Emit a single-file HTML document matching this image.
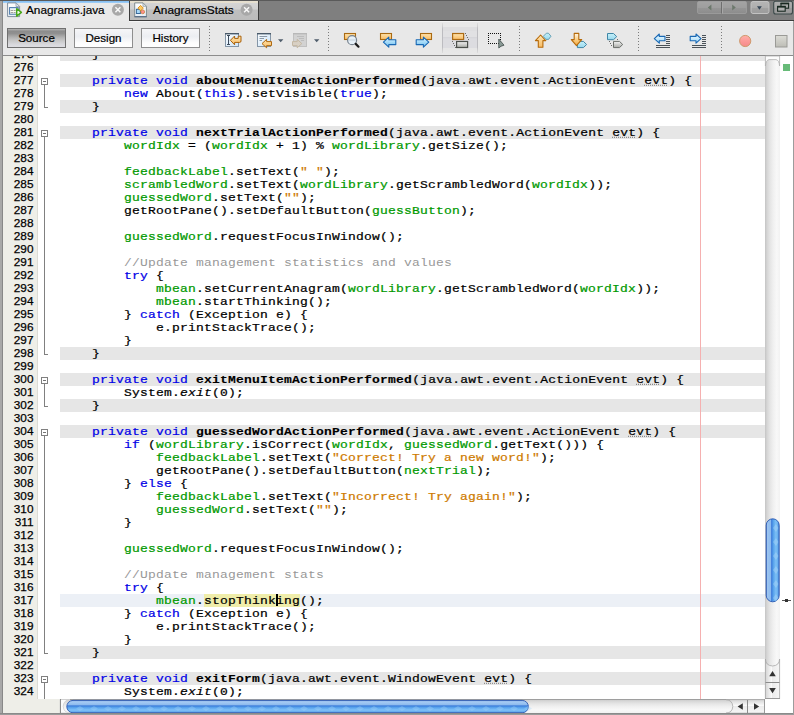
<!DOCTYPE html>
<html><head><meta charset="utf-8"><title>Anagrams.java</title>
<style>
html,body{margin:0;padding:0}
body{width:794px;height:715px;overflow:hidden;background:#fff;position:relative;font-family:"Liberation Sans",sans-serif}
.abs,#win *{position:absolute;box-sizing:border-box}
#win{position:absolute;left:0;top:0;width:794px;height:715px;overflow:hidden;background:#fff}
/* tab bar */
#tabbar{left:0;top:0;width:794px;height:21px;background:#7f7f7f}
#tabbar .botline{left:129px;top:20px;width:665px;height:1px;background:#3c3c3c}
#tabbar .topline{left:0;top:0;width:794px;height:1px;background:#5a5a5a}
#tab1{left:3px;top:1px;width:126px;height:20px;background:#e9e9e9}
#tab1 .hl{left:0;top:0;width:126px;height:2px;background:linear-gradient(#7ebaf0,#a4d0f6)}
#tab2{left:130px;top:1px;width:129px;height:19px;background:linear-gradient(#e6dfcf 0,#e4decf 2px,#d4d4d4 2px,#d0d0d0 8px,#bfbfbf 9px,#bcbcbc 100%);border-right:1px solid #3c3c3c}
#tabsep{left:129px;top:1px;width:1px;height:20px;background:#3c3c3c}
.tabtxt{-webkit-text-stroke:0.2px #000;font-size:11.8px;color:#000;white-space:nowrap;line-height:14px}
.close{width:13px;height:13px;border-radius:7px;background:#a9a9a9}
/* toolbar */
#toolbar{left:3px;top:21px;width:791px;height:34px;background:#e8e8e8}
#tbhl{left:129px;top:21px;width:665px;height:1px;background:#f4f4f4}
#tbline{left:0;top:55px;width:794px;height:1px;background:#8c8c8c}
.btn{-webkit-text-stroke:0.2px #000;top:28px;width:59px;height:20px;border:1px solid #8e8e8e;background:linear-gradient(#f6f6f8 0,#eceef2 40%,#f2f3f6 55%,#fcfcfc 75%,#ffffff);font-size:11.6px;text-align:center;line-height:18px;color:#000}
.btn.sel{border-color:#707070;background:linear-gradient(#b4b4b4 0,#8c8c8c 12%,#909090 25%,#b0b0b0 45%,#c8c8c8 65%,#d8d8dc 85%,#dedee2 100%)}
.sep{top:25px;width:1px;height:26px;background:repeating-linear-gradient(#8a8a8a 0 1px,transparent 1px 3px)}
/* borders */
#lb{left:0;top:1px;width:3px;height:714px;background:linear-gradient(90deg,#a8a8a8 0 2px,#888 2px)}
#bb{left:0;top:713px;width:794px;height:2px;background:linear-gradient(#8a8a8a 0 1px,#9c9c9c 1px)}
#rb{left:793px;top:21px;width:1px;height:694px;background:#9c9c9c}
/* editor */
#gutter{left:3px;top:56px;width:34px;height:643px;background:#eeeee8}
#gutline{left:37px;top:56px;width:1px;height:643px;background:#dcdcd6}
#corner{left:3px;top:699px;width:57px;height:14px;background:#eeeee8}
#ed{left:0;top:56px;width:794px;height:643px;overflow:hidden}
#edin{left:0;top:-56px;width:794px;height:760px}
.num{-webkit-text-stroke:0.25px #000;left:2px;width:31.5px;height:13px;text-align:right;font-size:11.8px;line-height:13px;margin-top:0px;color:#000;white-space:pre}
.ln{left:60px;width:705px;height:13px;font-family:"Liberation Mono",monospace;font-size:13px;letter-spacing:0.2px;line-height:13px;white-space:pre;color:#000;-webkit-text-stroke:0.25px currentColor}
.ln.g{background:#e6e6e6}
.ln.cur{background:none}
#curband{left:60px;top:594px;width:705px;height:13px;background:#ecf0f6}
.ln span{position:static!important}
.ln .t{display:inline-block;transform:scaleY(0.9);transform-origin:0 10px}
.k{color:#0000e6}.f{color:#009900}.s{color:#ce7b00}.c{color:#989898;-webkit-text-stroke:0}.m{font-weight:bold;-webkit-text-stroke:0.15px currentColor}.i{font-style:italic}
.u{text-decoration:underline dotted #8a8a8a;text-underline-offset:1px}
.h{}
#hl{left:204px;top:594px;width:96px;height:13px;background:#efedaa}
.fbox{left:41px;width:7px;height:7px;border:1px solid #808080;background:#fff}
.fbox i{left:1px;top:2px;width:3px;height:1px;background:#747474}
.fv{left:44px;width:1px;background:#808080}
.fh{left:44px;width:4px;height:1px;background:#808080}
#margin{left:700px;top:56px;width:1px;height:643px;background:#f5b0b0}
#caret{left:276px;top:594px;width:2px;height:12px;background:#000}
/* scrollbars */
#vs{left:765px;top:56px;width:15px;height:643px;background:linear-gradient(90deg,#c4c4c4,#d6d6d6 14%,#e6e6e6 35%,#f0f0f0 55%,#f8f8f8 78%,#f2f2f2)}
#hs{left:60px;top:699px;width:705px;height:14px;background:linear-gradient(#c4c4c4,#d6d6d6 14%,#e6e6e6 35%,#f0f0f0 55%,#f8f8f8 78%,#f2f2f2)}
#stripe{left:780px;top:56px;width:13px;height:657px;background:#fff}
#green{left:783px;top:64px;width:7px;height:7px;background:#67bb78}
</style></head><body>
<div id="win">
<div id="tabbar"><div class="topline"></div><div class="botline"></div>
 <div id="tab1"><div class="hl"></div><div class="tabtxt" style="left:23px;top:2px">Anagrams.java</div></div>
 <div id="tabsep"></div>
 <div id="tab2"><div class="tabtxt" style="left:23px;top:2px">AnagramsStats</div></div>
</div>
<div id="toolbar"></div><div id="tbhl"></div>
<div class="btn sel" style="left:7px">Source</div>
<div class="btn" style="left:74px">Design</div>
<div class="btn" style="left:141px">History</div>
<div id="tbline"></div>
<svg id="icons" style="left:0;top:21px" width="794" height="35" viewBox="0 21 794 35">
<defs>
<linearGradient id="gO" x1="0" y1="0" x2="0" y2="1"><stop offset="0" stop-color="#ffe4ae"/><stop offset="1" stop-color="#f8bc64"/></linearGradient>
<linearGradient id="gO2" x1="0" y1="0" x2="0" y2="1"><stop offset="0" stop-color="#fff6e4"/><stop offset="0.5" stop-color="#fbd088"/><stop offset="1" stop-color="#f2a83c"/></linearGradient>
<linearGradient id="gB" x1="0" y1="0" x2="0" y2="1"><stop offset="0" stop-color="#e0f4ff"/><stop offset="0.5" stop-color="#a4daf8"/><stop offset="1" stop-color="#6cbcee"/></linearGradient>
<linearGradient id="gB2" x1="0" y1="0" x2="0" y2="1"><stop offset="0" stop-color="#f0faff"/><stop offset="0.5" stop-color="#c8eafc"/><stop offset="1" stop-color="#94d2f6"/></linearGradient>
<linearGradient id="gG" x1="0" y1="0" x2="0" y2="1"><stop offset="0" stop-color="#f4f4f4"/><stop offset="1" stop-color="#a8aaa6"/></linearGradient>
<linearGradient id="gD" x1="0" y1="0" x2="1" y2="1"><stop offset="0" stop-color="#ffffff"/><stop offset="0.5" stop-color="#e2f0fc"/><stop offset="1" stop-color="#cfe6fa"/></linearGradient>
<linearGradient id="gC" x1="0" y1="0" x2="0" y2="1"><stop offset="0" stop-color="#c6f0f8"/><stop offset="1" stop-color="#98d8ee"/></linearGradient>
<linearGradient id="gR" x1="0" y1="0" x2="0" y2="1"><stop offset="0" stop-color="#ffb0a8"/><stop offset="0.5" stop-color="#fb9a98"/><stop offset="1" stop-color="#f58a8a"/></linearGradient>
<linearGradient id="gS" x1="0" y1="0" x2="0" y2="1"><stop offset="0" stop-color="#dcdcd6"/><stop offset="1" stop-color="#bdbdb6"/></linearGradient>
<linearGradient id="gP" x1="0" y1="0" x2="0" y2="1"><stop offset="0" stop-color="#e8e8e8"/><stop offset="0.12" stop-color="#e8e8e8"/><stop offset="0.13" stop-color="#dedee0"/><stop offset="0.27" stop-color="#dedee0"/><stop offset="0.28" stop-color="#e1e1e3"/><stop offset="0.47" stop-color="#e1e1e3"/><stop offset="0.48" stop-color="#d6d6da"/><stop offset="0.51" stop-color="#d6d6da"/><stop offset="0.52" stop-color="#dcdce0"/><stop offset="0.84" stop-color="#dcdce0"/><stop offset="0.85" stop-color="#e6e6e6"/><stop offset="1" stop-color="#e8e8e8"/></linearGradient>
<linearGradient id="gPb" x1="0" y1="0" x2="0" y2="1"><stop offset="0" stop-color="#c4c4c4" stop-opacity="0.3"/><stop offset="0.2" stop-color="#bcbcc0"/><stop offset="0.8" stop-color="#bcbcc0"/><stop offset="1" stop-color="#c4c4c4" stop-opacity="0.3"/></linearGradient>
</defs>
<rect x="209" y="26" width="1" height="1" fill="#7c7c7c"/>
<rect x="209" y="29" width="1" height="1" fill="#7c7c7c"/>
<rect x="209" y="32" width="1" height="1" fill="#7c7c7c"/>
<rect x="209" y="35" width="1" height="1" fill="#7c7c7c"/>
<rect x="209" y="38" width="1" height="1" fill="#7c7c7c"/>
<rect x="209" y="41" width="1" height="1" fill="#7c7c7c"/>
<rect x="209" y="44" width="1" height="1" fill="#7c7c7c"/>
<rect x="209" y="47" width="1" height="1" fill="#7c7c7c"/>
<rect x="209" y="50" width="1" height="1" fill="#7c7c7c"/>
<rect x="328" y="26" width="1" height="1" fill="#7c7c7c"/>
<rect x="328" y="29" width="1" height="1" fill="#7c7c7c"/>
<rect x="328" y="32" width="1" height="1" fill="#7c7c7c"/>
<rect x="328" y="35" width="1" height="1" fill="#7c7c7c"/>
<rect x="328" y="38" width="1" height="1" fill="#7c7c7c"/>
<rect x="328" y="41" width="1" height="1" fill="#7c7c7c"/>
<rect x="328" y="44" width="1" height="1" fill="#7c7c7c"/>
<rect x="328" y="47" width="1" height="1" fill="#7c7c7c"/>
<rect x="328" y="50" width="1" height="1" fill="#7c7c7c"/>
<rect x="519" y="26" width="1" height="1" fill="#7c7c7c"/>
<rect x="519" y="29" width="1" height="1" fill="#7c7c7c"/>
<rect x="519" y="32" width="1" height="1" fill="#7c7c7c"/>
<rect x="519" y="35" width="1" height="1" fill="#7c7c7c"/>
<rect x="519" y="38" width="1" height="1" fill="#7c7c7c"/>
<rect x="519" y="41" width="1" height="1" fill="#7c7c7c"/>
<rect x="519" y="44" width="1" height="1" fill="#7c7c7c"/>
<rect x="519" y="47" width="1" height="1" fill="#7c7c7c"/>
<rect x="519" y="50" width="1" height="1" fill="#7c7c7c"/>
<rect x="638" y="26" width="1" height="1" fill="#7c7c7c"/>
<rect x="638" y="29" width="1" height="1" fill="#7c7c7c"/>
<rect x="638" y="32" width="1" height="1" fill="#7c7c7c"/>
<rect x="638" y="35" width="1" height="1" fill="#7c7c7c"/>
<rect x="638" y="38" width="1" height="1" fill="#7c7c7c"/>
<rect x="638" y="41" width="1" height="1" fill="#7c7c7c"/>
<rect x="638" y="44" width="1" height="1" fill="#7c7c7c"/>
<rect x="638" y="47" width="1" height="1" fill="#7c7c7c"/>
<rect x="638" y="50" width="1" height="1" fill="#7c7c7c"/>
<rect x="721" y="26" width="1" height="1" fill="#7c7c7c"/>
<rect x="721" y="29" width="1" height="1" fill="#7c7c7c"/>
<rect x="721" y="32" width="1" height="1" fill="#7c7c7c"/>
<rect x="721" y="35" width="1" height="1" fill="#7c7c7c"/>
<rect x="721" y="38" width="1" height="1" fill="#7c7c7c"/>
<rect x="721" y="41" width="1" height="1" fill="#7c7c7c"/>
<rect x="721" y="44" width="1" height="1" fill="#7c7c7c"/>
<rect x="721" y="47" width="1" height="1" fill="#7c7c7c"/>
<rect x="721" y="50" width="1" height="1" fill="#7c7c7c"/>
<rect x="225.5" y="33.5" width="13" height="13" fill="url(#gD)" stroke="#8495a6"/>
<rect x="225" y="33" width="14" height="1.4" fill="#4a5a6a"/>
<path d="M227,35.5 h3 M228.5,36 v8 M227,44.5 h3" stroke="#3e4c5c" stroke-width="1" fill="none"/>
<path d="M230.4,40.3 L234.6,36 L234.6,38.4 L238.2,38.4 L238.2,36.2 L241,36.2 L241,41 Q241,42.4 239.6,42.4 L234.6,42.4 L234.6,44.8 Z" fill="url(#gO)" stroke="#a8600a" stroke-width="1" stroke-linejoin="round"/>
<rect x="257.5" y="33.5" width="13" height="13" fill="url(#gD)" stroke="#8495a6"/>
<rect x="257" y="33" width="14" height="1.4" fill="#4a5a6a"/>
<path d="M259.5,36.5 h7.7 M259.5,38.5 h4.5 M259.5,40.5 h2.5" stroke="#8c9aa8" stroke-width="1"/>
<path d="M262,43.6 L266.6,39.4 L266.6,41.6 L271.5,41.6 L271.5,45.6 L266.6,45.6 L266.6,47.800000000000004 Z" fill="url(#gO)" stroke="#b06a12" stroke-width="1" stroke-linejoin="round"/>
<path d="M278,39.2 h5.4 l-2.7,3 z" fill="#4f5d6b"/>
<rect x="293.5" y="33.5" width="13" height="13" fill="#d2d2d2" stroke="#c0c0c0"/>
<rect x="293" y="33" width="14" height="1.4" fill="#b8b8b8"/>
<path d="M297,36.5 h7 M299,38.5 h5 M301,40.5 h3" stroke="#bcbcbc" stroke-width="1"/>
<path d="M301.8,43.6 L297.2,39.4 L297.2,41.6 L292.5,41.6 L292.5,45.6 L297.2,45.6 L297.2,47.800000000000004 Z" fill="#d8d0c4" stroke="#c4b8a4" stroke-width="1" stroke-linejoin="round"/>
<path d="M314,39.2 h5.4 l-2.7,3 z" fill="#4f5d6b"/>
<rect x="344.5" y="33.5" width="11" height="6" fill="url(#gO)" stroke="#aa6a12" stroke-width="1.1"/>
<circle cx="352.1" cy="40.2" r="4.5" fill="#e6f0f8" stroke="#76828e" stroke-width="1.2"/>
<path d="M348.5,40 h7.4" stroke="#b9c6d2" stroke-width="0.8"/>
<path d="M355.7,43.9 L358.5,46.7" stroke="#1c1c1c" stroke-width="2.2" stroke-linecap="round"/>
<rect x="380.5" y="33.5" width="11" height="6" fill="url(#gO)" stroke="#aa6a12" stroke-width="1.1"/>
<path d="M383.4,42.2 L388.79999999999995,37.2 L388.79999999999995,39.800000000000004 L395.8,39.800000000000004 L395.8,44.6 L388.79999999999995,44.6 L388.79999999999995,47.2 Z" fill="url(#gB)" stroke="#1868b4" stroke-width="1.1" stroke-linejoin="round"/>
<rect x="420.5" y="33.5" width="11" height="6" fill="url(#gO)" stroke="#aa6a12" stroke-width="1.1"/>
<path d="M428.8,42.2 L423.40000000000003,37.2 L423.40000000000003,39.800000000000004 L416.2,39.800000000000004 L416.2,44.6 L423.40000000000003,44.6 L423.40000000000003,47.2 Z" fill="url(#gB)" stroke="#1868b4" stroke-width="1.1" stroke-linejoin="round"/>
<rect x="442" y="23" width="36" height="30" fill="url(#gP)"/>
<rect x="442" y="23" width="1" height="30" fill="url(#gPb)"/><rect x="477" y="23" width="1" height="30" fill="url(#gPb)"/>
<rect x="452" y="41" width="1" height="1" fill="#6a6a6a"/>
<rect x="453" y="43" width="1" height="1" fill="#6a6a6a"/>
<rect x="454" y="45" width="1" height="1" fill="#6a6a6a"/>
<rect x="455" y="47" width="1" height="1" fill="#6a6a6a"/>
<rect x="465" y="33" width="1" height="1" fill="#6a6a6a"/>
<rect x="466" y="35" width="1" height="1" fill="#6a6a6a"/>
<rect x="467" y="37" width="1" height="1" fill="#6a6a6a"/>
<rect x="468" y="39" width="1" height="1" fill="#6a6a6a"/>
<rect x="452.6" y="33.5" width="11" height="6" fill="url(#gO)" stroke="#ad6b14" stroke-width="1.2"/>
<rect x="456.6" y="41.5" width="11" height="6" fill="url(#gG)" stroke="#4c504c" stroke-width="1.2"/>
<rect x="488" y="33" width="1" height="1" fill="#111"/><rect x="488" y="43" width="1" height="1" fill="#111"/>
<rect x="490" y="33" width="1" height="1" fill="#111"/><rect x="490" y="43" width="1" height="1" fill="#111"/>
<rect x="492" y="33" width="1" height="1" fill="#111"/><rect x="492" y="43" width="1" height="1" fill="#111"/>
<rect x="494" y="33" width="1" height="1" fill="#111"/><rect x="494" y="43" width="1" height="1" fill="#111"/>
<rect x="496" y="33" width="1" height="1" fill="#111"/><rect x="496" y="43" width="1" height="1" fill="#111"/>
<rect x="498" y="33" width="1" height="1" fill="#111"/><rect x="498" y="43" width="1" height="1" fill="#111"/>
<rect x="500" y="33" width="1" height="1" fill="#111"/><rect x="500" y="43" width="1" height="1" fill="#111"/>
<rect x="488" y="35" width="1" height="1" fill="#111"/><rect x="500" y="35" width="1" height="1" fill="#111"/>
<rect x="488" y="37" width="1" height="1" fill="#111"/><rect x="500" y="37" width="1" height="1" fill="#111"/>
<rect x="488" y="39" width="1" height="1" fill="#111"/><rect x="500" y="39" width="1" height="1" fill="#111"/>
<rect x="488" y="41" width="1" height="1" fill="#111"/><rect x="500" y="41" width="1" height="1" fill="#111"/>
<path d="M498.8,39 L498.8,48 L501,46.2 L504,45.2 Z" fill="#8a9a96" stroke="#4a5654" stroke-width="0.9" stroke-linejoin="round"/>
<path d="M540.6,35 L545.8000000000001,40.6 L542.9,40.6 L542.9,47.3 L538.3000000000001,47.3 L538.3000000000001,40.6 L535.4,40.6 Z" fill="url(#gO)" stroke="#b66a0a" stroke-width="1.1" stroke-linejoin="round"/>
<path d="M543.2,36.4 L546.4,33.2 L548.4,33.2 L551,36.2 L548.6,39.4 L546,39.4 Z" fill="url(#gC)" stroke="#5b9ab0" stroke-width="0.9" stroke-linejoin="round"/>
<path d="M577.4,41.4 L583.4,41.4 L586.6,44.5 L583.4,47.6 L577.4,47.6 Z" fill="url(#gC)" stroke="#3f86a6" stroke-width="1" stroke-linejoin="round"/>
<path d="M576.5,45.6 L581.7,39.6 L578.8,39.6 L578.8,33.4 L574.2,33.4 L574.2,39.6 L571.3,39.6 Z" fill="url(#gO2)" stroke="#b66a0a" stroke-width="1.1" stroke-linejoin="round"/>
<rect x="609" y="41" width="1" height="1" fill="#6a6a6a"/>
<rect x="610" y="43" width="1" height="1" fill="#6a6a6a"/>
<rect x="611" y="45" width="1" height="1" fill="#6a6a6a"/>
<rect x="617" y="39" width="1" height="1" fill="#6a6a6a"/>
<path d="M607.5,33.5 L613.5,33.5 L616.7,36.6 L613.5,39.7 L607.5,39.7 Z" fill="url(#gC)" stroke="#3f86a6" stroke-width="1" stroke-linejoin="round"/>
<path d="M613.5,41.4 L619.5,41.4 L622.7,44.5 L619.5,47.6 L613.5,47.6 Z" fill="url(#gG)" stroke="#6a6e6a" stroke-width="1" stroke-linejoin="round"/>
<path d="M654.3,38.6 L659.3,34.0 L659.3,36.4 L665,36.4 L665,40.800000000000004 L659.3,40.800000000000004 L659.3,43.2 Z" fill="url(#gB2)" stroke="#1868b4" stroke-width="1.1" stroke-linejoin="round"/>
<rect x="666" y="35" width="4" height="1" fill="#4a5258"/>
<rect x="666" y="37" width="4" height="1" fill="#4a5258"/>
<rect x="666" y="39" width="4" height="1" fill="#4a5258"/>
<rect x="666" y="41" width="4" height="1" fill="#4a5258"/>
<rect x="666" y="43" width="4" height="1" fill="#4a5258"/>
<rect x="656" y="45" width="14" height="1" fill="#4a5258"/>
<rect x="656" y="47" width="14" height="1" fill="#4a5258"/>
<path d="M701,38.6 L696,34.0 L696,36.4 L690.2,36.4 L690.2,40.800000000000004 L696,40.800000000000004 L696,43.2 Z" fill="url(#gB2)" stroke="#1868b4" stroke-width="1.1" stroke-linejoin="round"/>
<rect x="702" y="35" width="4" height="1" fill="#4a5258"/>
<rect x="702" y="37" width="4" height="1" fill="#4a5258"/>
<rect x="702" y="39" width="4" height="1" fill="#4a5258"/>
<rect x="702" y="41" width="4" height="1" fill="#4a5258"/>
<rect x="702" y="43" width="4" height="1" fill="#4a5258"/>
<rect x="692" y="45" width="14" height="1" fill="#4a5258"/>
<rect x="692" y="47" width="14" height="1" fill="#4a5258"/>
<circle cx="745.2" cy="41" r="5.6" fill="url(#gR)" stroke="#cf9a6e" stroke-width="1"/>
<rect x="775.5" y="35.5" width="11.5" height="11.5" fill="url(#gS)" stroke="#9a9a96" stroke-width="1"/>
</svg>
<svg id="tabicons" style="left:0;top:0" width="794" height="21" viewBox="0 0 794 21">
<defs><linearGradient id="gDoc" x1="0" y1="0" x2="0" y2="1"><stop offset="0" stop-color="#ffffff"/><stop offset="1" stop-color="#e6eef6"/></linearGradient><linearGradient id="gT1" x1="0" y1="0" x2="0" y2="1"><stop offset="0" stop-color="#a4a4a4"/><stop offset="0.5" stop-color="#9e9e9e"/><stop offset="0.52" stop-color="#969696"/><stop offset="1" stop-color="#8c8c8c"/></linearGradient><linearGradient id="gT2" x1="0" y1="0" x2="0" y2="1"><stop offset="0" stop-color="#b6b6b6"/><stop offset="0.5" stop-color="#aeaeae"/><stop offset="0.52" stop-color="#a2a2a2"/><stop offset="1" stop-color="#9c9c9c"/></linearGradient><linearGradient id="gT3" x1="0" y1="0" x2="0" y2="1"><stop offset="0" stop-color="#b0b0b0"/><stop offset="0.5" stop-color="#a8a8a8"/><stop offset="0.52" stop-color="#9e9e9e"/><stop offset="1" stop-color="#989898"/></linearGradient></defs>
<path d="M7.6,2.9 L16,2.9 L19.6,6.5 L19.6,16.6 L7.6,16.6 Z" fill="url(#gDoc)" stroke="#7f8f9f" stroke-width="1"/>
<path d="M16,2.9 L16,6.5 L19.6,6.5 Z" fill="#e4eaf0" stroke="#8f9dab" stroke-width="0.8"/>
<rect x="9.6" y="7.6" width="8.6" height="6.6" fill="#fffef2" stroke="#4a78a8" stroke-width="1"/>
<rect x="10" y="8" width="7.8" height="1.4" fill="#cfe2f4"/>
<path d="M10.6,10.5 h2.4 M13.6,10.5 h2 M10.6,12.5 h2.4 M13.6,12.5 h2" stroke="#8a8a8a" stroke-width="0.8"/>
<path d="M16.7,8.7 L21.4,12.4 L16.7,16.1 Z" fill="#f6fbee" stroke="#48a818" stroke-width="1.5" stroke-linejoin="round"/>
<path d="M134.7,2.9 L143,2.9 L146.4,6.3 L146.4,16.6 L134.7,16.6 Z" fill="url(#gDoc)" stroke="#808c8e" stroke-width="1"/>
<path d="M143,2.9 L143,6.3 L146.4,6.3 Z" fill="#e4eaee" stroke="#909c9e" stroke-width="0.8"/>
<path d="M134.4,16.7 H146.8" stroke="#5a7088" stroke-width="1.3"/>
<rect x="136.4" y="9.3" width="4" height="4.2" fill="#a8d8f8" stroke="#3a6a9a" stroke-width="1"/>
<path d="M140.6,5.4 L143.3,8.1 L140.6,10.8 L137.9,8.1 Z" fill="#ffca62" stroke="#d88a10" stroke-width="0.9" stroke-linejoin="round"/>
<circle cx="142.7" cy="11.8" r="1.9" fill="#ff8e8e" stroke="#c8803a" stroke-width="0.8"/>
<circle cx="117.9" cy="9.8" r="6" fill="#a8a8a8"/>
<path d="M115.4,7.300000000000001 L120.4,12.3 M120.4,7.300000000000001 L115.4,12.3" stroke="#f8f8f8" stroke-width="1.5" stroke-linecap="butt"/>
<circle cx="246.6" cy="9.8" r="6" fill="#a8a8a8"/>
<path d="M244.1,7.300000000000001 L249.1,12.3 M249.1,7.300000000000001 L244.1,12.3" stroke="#f8f8f8" stroke-width="1.5" stroke-linecap="butt"/>
<rect x="697.5" y="1.5" width="49" height="12" rx="1.5" fill="url(#gT1)" stroke="#a2a2a2" stroke-opacity="0.7"/>
<rect x="721" y="2" width="1" height="11.5" fill="#6e6e6e"/><rect x="722" y="2" width="1" height="11.5" fill="#a8a8a8"/>
<path d="M711.4,4.4 L711.4,10.6 L707.8,7.5 Z M732.2,4.4 L732.2,10.6 L735.8,7.5 Z" fill="#6c786c"/>
<rect x="751" y="1.5" width="18" height="12" rx="2" fill="url(#gT2)" stroke="#c2c2c2"/>
<path d="M757,6.2 h4.8 l-2.4,3.6 z" fill="#364656"/>
<rect x="773.7" y="1.2" width="18.8" height="12.8" rx="2" fill="url(#gT3)" stroke="#3c4a4a" stroke-width="1.1"/>
<rect x="781" y="3.6" width="7.6" height="4.6" fill="#a8a8a8" stroke="#182820" stroke-width="1.1"/><rect x="780.5" y="2.6" width="8.6" height="1.6" fill="#182820"/>
<rect x="777.6" y="6.8" width="7.6" height="4.4" fill="#b0b0b0" stroke="#182820" stroke-width="1.1"/><rect x="777.1" y="5.8" width="8.6" height="1.6" fill="#182820"/>
</svg>

<div id="gutter"></div><div id="gutline"></div>
<div id="ed"><div id="edin">
<div id="curband"></div><div id="hl"></div>
<div class="num" style="top:48px">275</div>
<div class="num" style="top:61px">276</div>
<div class="num" style="top:74px">277</div>
<div class="num" style="top:87px">278</div>
<div class="num" style="top:100px">279</div>
<div class="num" style="top:113px">280</div>
<div class="num" style="top:126px">281</div>
<div class="num" style="top:139px">282</div>
<div class="num" style="top:152px">283</div>
<div class="num" style="top:165px">284</div>
<div class="num" style="top:178px">285</div>
<div class="num" style="top:191px">286</div>
<div class="num" style="top:204px">287</div>
<div class="num" style="top:217px">288</div>
<div class="num" style="top:230px">289</div>
<div class="num" style="top:243px">290</div>
<div class="num" style="top:256px">291</div>
<div class="num" style="top:269px">292</div>
<div class="num" style="top:282px">293</div>
<div class="num" style="top:295px">294</div>
<div class="num" style="top:308px">295</div>
<div class="num" style="top:321px">296</div>
<div class="num" style="top:334px">297</div>
<div class="num" style="top:347px">298</div>
<div class="num" style="top:360px">299</div>
<div class="num" style="top:373px">300</div>
<div class="num" style="top:386px">301</div>
<div class="num" style="top:399px">302</div>
<div class="num" style="top:412px">303</div>
<div class="num" style="top:425px">304</div>
<div class="num" style="top:438px">305</div>
<div class="num" style="top:451px">306</div>
<div class="num" style="top:464px">307</div>
<div class="num" style="top:477px">308</div>
<div class="num" style="top:490px">309</div>
<div class="num" style="top:503px">310</div>
<div class="num" style="top:516px">311</div>
<div class="num" style="top:529px">312</div>
<div class="num" style="top:542px">313</div>
<div class="num" style="top:555px">314</div>
<div class="num" style="top:568px">315</div>
<div class="num" style="top:581px">316</div>
<div class="num" style="top:594px">317</div>
<div class="num" style="top:607px">318</div>
<div class="num" style="top:620px">319</div>
<div class="num" style="top:633px">320</div>
<div class="num" style="top:646px">321</div>
<div class="num" style="top:659px">322</div>
<div class="num" style="top:672px">323</div>
<div class="num" style="top:685px">324</div>
<div class="fbox" style="top:78px"><i></i></div>
<div class="fv" style="top:85px;height:23px"></div>
<div class="fh" style="top:107px"></div>
<div class="fbox" style="top:130px"><i></i></div>
<div class="fv" style="top:137px;height:218px"></div>
<div class="fh" style="top:354px"></div>
<div class="fbox" style="top:377px"><i></i></div>
<div class="fv" style="top:384px;height:23px"></div>
<div class="fh" style="top:406px"></div>
<div class="fbox" style="top:429px"><i></i></div>
<div class="fv" style="top:436px;height:218px"></div>
<div class="fh" style="top:653px"></div>
<div class="fbox" style="top:676px"><i></i></div>
<div class="fv" style="top:683px;height:88px"></div>
<div class="fh" style="top:770px"></div>
<div class="fv" style="top:40px;height:16px"></div>
<div class="fh" style="top:55px"></div>
<div class="ln g" style="top:48px"><span class="t">    }</span></div>
<div class="ln" style="top:61px"></div>
<div class="ln g" style="top:74px"><span class="t">    <span class="k">private</span> <span class="k">void</span> <span class="m">aboutMenuItemActionPerformed</span>(java.awt.event.ActionEvent <span class="u">evt</span>) {</span></div>
<div class="ln" style="top:87px"><span class="t">        <span class="k">new</span> About(<span class="k">this</span>).setVisible(<span class="k">true</span>);</span></div>
<div class="ln g" style="top:100px"><span class="t">    }</span></div>
<div class="ln" style="top:113px"></div>
<div class="ln g" style="top:126px"><span class="t">    <span class="k">private</span> <span class="k">void</span> <span class="m">nextTrialActionPerformed</span>(java.awt.event.ActionEvent <span class="u">evt</span>) {</span></div>
<div class="ln" style="top:139px"><span class="t">        <span class="f">wordIdx</span> = (<span class="f">wordIdx</span> + 1) % <span class="f">wordLibrary</span>.getSize();</span></div>
<div class="ln" style="top:152px"></div>
<div class="ln" style="top:165px"><span class="t">        <span class="f">feedbackLabel</span>.setText(<span class="s">" "</span>);</span></div>
<div class="ln" style="top:178px"><span class="t">        <span class="f">scrambledWord</span>.setText(<span class="f">wordLibrary</span>.getScrambledWord(<span class="f">wordIdx</span>));</span></div>
<div class="ln" style="top:191px"><span class="t">        <span class="f">guessedWord</span>.setText(<span class="s">""</span>);</span></div>
<div class="ln" style="top:204px"><span class="t">        getRootPane().setDefaultButton(<span class="f">guessButton</span>);</span></div>
<div class="ln" style="top:217px"></div>
<div class="ln" style="top:230px"><span class="t">        <span class="f">guessedWord</span>.requestFocusInWindow();</span></div>
<div class="ln" style="top:243px"></div>
<div class="ln" style="top:256px"><span class="t">        <span class="c">//Update management statistics and values</span></span></div>
<div class="ln" style="top:269px"><span class="t">        <span class="k">try</span> {</span></div>
<div class="ln" style="top:282px"><span class="t">            <span class="f">mbean</span>.setCurrentAnagram(<span class="f">wordLibrary</span>.getScrambledWord(<span class="f">wordIdx</span>));</span></div>
<div class="ln" style="top:295px"><span class="t">            <span class="f">mbean</span>.startThinking();</span></div>
<div class="ln" style="top:308px"><span class="t">        } <span class="k">catch</span> (Exception e) {</span></div>
<div class="ln" style="top:321px"><span class="t">            e.printStackTrace();</span></div>
<div class="ln" style="top:334px"><span class="t">        }</span></div>
<div class="ln g" style="top:347px"><span class="t">    }</span></div>
<div class="ln" style="top:360px"></div>
<div class="ln g" style="top:373px"><span class="t">    <span class="k">private</span> <span class="k">void</span> <span class="m">exitMenuItemActionPerformed</span>(java.awt.event.ActionEvent <span class="u">evt</span>) {</span></div>
<div class="ln" style="top:386px"><span class="t">        System.<span class="i">exit</span>(0);</span></div>
<div class="ln g" style="top:399px"><span class="t">    }</span></div>
<div class="ln" style="top:412px"></div>
<div class="ln g" style="top:425px"><span class="t">    <span class="k">private</span> <span class="k">void</span> <span class="m">guessedWordActionPerformed</span>(java.awt.event.ActionEvent <span class="u">evt</span>) {</span></div>
<div class="ln" style="top:438px"><span class="t">        <span class="k">if</span> (<span class="f">wordLibrary</span>.isCorrect(<span class="f">wordIdx</span>, <span class="f">guessedWord</span>.getText())) {</span></div>
<div class="ln" style="top:451px"><span class="t">            <span class="f">feedbackLabel</span>.setText(<span class="s">"Correct! Try a new word!"</span>);</span></div>
<div class="ln" style="top:464px"><span class="t">            getRootPane().setDefaultButton(<span class="f">nextTrial</span>);</span></div>
<div class="ln" style="top:477px"><span class="t">        } <span class="k">else</span> {</span></div>
<div class="ln" style="top:490px"><span class="t">            <span class="f">feedbackLabel</span>.setText(<span class="s">"Incorrect! Try again!"</span>);</span></div>
<div class="ln" style="top:503px"><span class="t">            <span class="f">guessedWord</span>.setText(<span class="s">""</span>);</span></div>
<div class="ln" style="top:516px"><span class="t">        }</span></div>
<div class="ln" style="top:529px"></div>
<div class="ln" style="top:542px"><span class="t">        <span class="f">guessedWord</span>.requestFocusInWindow();</span></div>
<div class="ln" style="top:555px"></div>
<div class="ln" style="top:568px"><span class="t">        <span class="c">//Update management stats</span></span></div>
<div class="ln" style="top:581px"><span class="t">        <span class="k">try</span> {</span></div>
<div class="ln cur" style="top:594px"><span class="t">            <span class="f">mbean</span>.<span class="h">stopThinking</span>();</span></div>
<div class="ln" style="top:607px"><span class="t">        } <span class="k">catch</span> (Exception e) {</span></div>
<div class="ln" style="top:620px"><span class="t">            e.printStackTrace();</span></div>
<div class="ln" style="top:633px"><span class="t">        }</span></div>
<div class="ln g" style="top:646px"><span class="t">    }</span></div>
<div class="ln" style="top:659px"></div>
<div class="ln g" style="top:672px"><span class="t">    <span class="k">private</span> <span class="k">void</span> <span class="m">exitForm</span>(java.awt.event.WindowEvent <span class="u">evt</span>) {</span></div>
<div class="ln" style="top:685px"><span class="t">        System.<span class="i">exit</span>(0);</span></div>

<div id="margin" style="top:56px"></div>
<div id="caret"></div>
</div></div>
<div id="vs"></div>
<div id="stripe"></div><div id="green"></div>
<div id="corner"></div>
<div id="hs"></div>
<svg id="scrollsvg" style="left:0;top:0" width="794" height="715" viewBox="0 0 794 715">
<defs>
<linearGradient id="vT" x1="0" y1="0" x2="1" y2="0"><stop offset="0" stop-color="#4a78cc"/><stop offset="0.1" stop-color="#9cc4f0"/><stop offset="0.34" stop-color="#8cbaee"/><stop offset="0.42" stop-color="#3a7ada"/><stop offset="0.52" stop-color="#539eea"/><stop offset="0.75" stop-color="#7cc0f6"/><stop offset="0.92" stop-color="#62a8ec"/><stop offset="1" stop-color="#3668c0"/></linearGradient>
<linearGradient id="hT" x1="0" y1="0" x2="0" y2="1"><stop offset="0" stop-color="#4a78cc"/><stop offset="0.1" stop-color="#a8ccf4"/><stop offset="0.36" stop-color="#8cbaee"/><stop offset="0.44" stop-color="#3a7ada"/><stop offset="0.55" stop-color="#539eea"/><stop offset="0.78" stop-color="#80c2f8"/><stop offset="0.93" stop-color="#62a8ec"/><stop offset="1" stop-color="#3668c0"/></linearGradient>
<linearGradient id="bV" x1="0" y1="0" x2="1" y2="0"><stop offset="0" stop-color="#d4d4d4"/><stop offset="0.45" stop-color="#fbfbfb"/><stop offset="0.5" stop-color="#ececec"/><stop offset="1" stop-color="#f6f6f6"/></linearGradient>
<linearGradient id="bH" x1="0" y1="0" x2="0" y2="1"><stop offset="0" stop-color="#d4d4d4"/><stop offset="0.45" stop-color="#fbfbfb"/><stop offset="0.5" stop-color="#ececec"/><stop offset="1" stop-color="#f6f6f6"/></linearGradient>
</defs>
<path d="M765.4,56 L765.4,66 Q765.8,60.2 769,59.6 L776,59.6 Q779.2,60.2 779.6,66 L779.6,56 Z" fill="#fcfcfc" stroke="#b0b0b0" stroke-width="0.8"/>
<rect x="766.2" y="518.8" width="13" height="83" rx="6.5" fill="url(#vT)" stroke="#2a58b0" stroke-width="0.9"/>
<path d="M773,528 l3,-4 l2.4,4 l-2.4,4 z" fill="#b4dcfa" opacity="0.4"/>
<path d="M773,542 l3,-4 l2.4,4 l-2.4,4 z" fill="#b4dcfa" opacity="0.4"/>
<path d="M773,556 l3,-4 l2.4,4 l-2.4,4 z" fill="#b4dcfa" opacity="0.4"/>
<path d="M773,570 l3,-4 l2.4,4 l-2.4,4 z" fill="#b4dcfa" opacity="0.4"/>
<path d="M773,584 l3,-4 l2.4,4 l-2.4,4 z" fill="#b4dcfa" opacity="0.4"/>
<path d="M773,598 l3,-4 l2.4,4 l-2.4,4 z" fill="#b4dcfa" opacity="0.4"/>
<path d="M765.4,659 L765.4,698.5 L779.6,698.5 L779.6,659 Q779.4,665.6 772.5,666 Q765.6,665.6 765.4,659 Z" fill="url(#bV)" stroke="#a8a8a8" stroke-width="0.8"/>
<rect x="765.5" y="682" width="14" height="1" fill="#8c8c8c"/>
<rect x="765" y="698" width="15" height="1" fill="#9a9a9a"/>
<path d="M769.2,676.2 L775.8,676.2 L772.5,671 Z" fill="#333"/>
<path d="M769.2,688 L775.8,688 L772.5,693.2 Z" fill="#333"/>
<rect x="60" y="699" width="705" height="1" fill="#9e9e9e"/>
<path d="M60,699.5 L60,713 L70,713 Q63.6,712.6 63.2,706.4 Q63.6,700 70,699.5 Z" fill="#fbfbfb" stroke="#d0d0d0" stroke-width="0.8"/>
<rect x="60" y="699" width="1" height="14" fill="#8c8c8c"/>
<rect x="66.8" y="700.4" width="461.6" height="12.4" rx="6.2" fill="url(#hT)" stroke="#2a58b0" stroke-width="0.9"/>
<path d="M76,708.5 l4,-2.4 l4,2.4 l-4,2.4 z" fill="#a4d4fa" opacity="0.35"/>
<path d="M90,708.5 l4,-2.4 l4,2.4 l-4,2.4 z" fill="#a4d4fa" opacity="0.35"/>
<path d="M104,708.5 l4,-2.4 l4,2.4 l-4,2.4 z" fill="#a4d4fa" opacity="0.35"/>
<path d="M118,708.5 l4,-2.4 l4,2.4 l-4,2.4 z" fill="#a4d4fa" opacity="0.35"/>
<path d="M132,708.5 l4,-2.4 l4,2.4 l-4,2.4 z" fill="#a4d4fa" opacity="0.35"/>
<path d="M146,708.5 l4,-2.4 l4,2.4 l-4,2.4 z" fill="#a4d4fa" opacity="0.35"/>
<path d="M160,708.5 l4,-2.4 l4,2.4 l-4,2.4 z" fill="#a4d4fa" opacity="0.35"/>
<path d="M174,708.5 l4,-2.4 l4,2.4 l-4,2.4 z" fill="#a4d4fa" opacity="0.35"/>
<path d="M188,708.5 l4,-2.4 l4,2.4 l-4,2.4 z" fill="#a4d4fa" opacity="0.35"/>
<path d="M202,708.5 l4,-2.4 l4,2.4 l-4,2.4 z" fill="#a4d4fa" opacity="0.35"/>
<path d="M216,708.5 l4,-2.4 l4,2.4 l-4,2.4 z" fill="#a4d4fa" opacity="0.35"/>
<path d="M230,708.5 l4,-2.4 l4,2.4 l-4,2.4 z" fill="#a4d4fa" opacity="0.35"/>
<path d="M244,708.5 l4,-2.4 l4,2.4 l-4,2.4 z" fill="#a4d4fa" opacity="0.35"/>
<path d="M258,708.5 l4,-2.4 l4,2.4 l-4,2.4 z" fill="#a4d4fa" opacity="0.35"/>
<path d="M272,708.5 l4,-2.4 l4,2.4 l-4,2.4 z" fill="#a4d4fa" opacity="0.35"/>
<path d="M286,708.5 l4,-2.4 l4,2.4 l-4,2.4 z" fill="#a4d4fa" opacity="0.35"/>
<path d="M300,708.5 l4,-2.4 l4,2.4 l-4,2.4 z" fill="#a4d4fa" opacity="0.35"/>
<path d="M314,708.5 l4,-2.4 l4,2.4 l-4,2.4 z" fill="#a4d4fa" opacity="0.35"/>
<path d="M328,708.5 l4,-2.4 l4,2.4 l-4,2.4 z" fill="#a4d4fa" opacity="0.35"/>
<path d="M342,708.5 l4,-2.4 l4,2.4 l-4,2.4 z" fill="#a4d4fa" opacity="0.35"/>
<path d="M356,708.5 l4,-2.4 l4,2.4 l-4,2.4 z" fill="#a4d4fa" opacity="0.35"/>
<path d="M370,708.5 l4,-2.4 l4,2.4 l-4,2.4 z" fill="#a4d4fa" opacity="0.35"/>
<path d="M384,708.5 l4,-2.4 l4,2.4 l-4,2.4 z" fill="#a4d4fa" opacity="0.35"/>
<path d="M398,708.5 l4,-2.4 l4,2.4 l-4,2.4 z" fill="#a4d4fa" opacity="0.35"/>
<path d="M412,708.5 l4,-2.4 l4,2.4 l-4,2.4 z" fill="#a4d4fa" opacity="0.35"/>
<path d="M426,708.5 l4,-2.4 l4,2.4 l-4,2.4 z" fill="#a4d4fa" opacity="0.35"/>
<path d="M440,708.5 l4,-2.4 l4,2.4 l-4,2.4 z" fill="#a4d4fa" opacity="0.35"/>
<path d="M454,708.5 l4,-2.4 l4,2.4 l-4,2.4 z" fill="#a4d4fa" opacity="0.35"/>
<path d="M468,708.5 l4,-2.4 l4,2.4 l-4,2.4 z" fill="#a4d4fa" opacity="0.35"/>
<path d="M482,708.5 l4,-2.4 l4,2.4 l-4,2.4 z" fill="#a4d4fa" opacity="0.35"/>
<path d="M496,708.5 l4,-2.4 l4,2.4 l-4,2.4 z" fill="#a4d4fa" opacity="0.35"/>
<path d="M510,708.5 l4,-2.4 l4,2.4 l-4,2.4 z" fill="#a4d4fa" opacity="0.35"/>
<path d="M524,708.5 l4,-2.4 l4,2.4 l-4,2.4 z" fill="#a4d4fa" opacity="0.35"/>
<path d="M726,699.6 L764.6,699.6 L764.6,713.2 L726,713.2 Q732.4,712.8 732.8,706.4 Q732.4,700 726,699.6 Z" fill="url(#bH)" stroke="#a8a8a8" stroke-width="0.8"/>
<rect x="747" y="700" width="1" height="13" fill="#8c8c8c"/>
<rect x="764" y="699" width="1" height="14" fill="#9a9a9a"/>
<path d="M742.8,703.3 L742.8,709.7 L737.6,706.5 Z" fill="#333"/>
<path d="M754,703.3 L754,709.7 L759.2,706.5 Z" fill="#333"/>
<rect x="765" y="699" width="15" height="14" fill="#ffffff"/>
<rect x="782" y="600" width="9" height="1" fill="#555"/><rect x="785" y="599" width="3" height="3" fill="#333"/>
</svg>

<div id="lb"></div><div id="bb"></div><div id="rb"></div>
</div>
</body></html>
